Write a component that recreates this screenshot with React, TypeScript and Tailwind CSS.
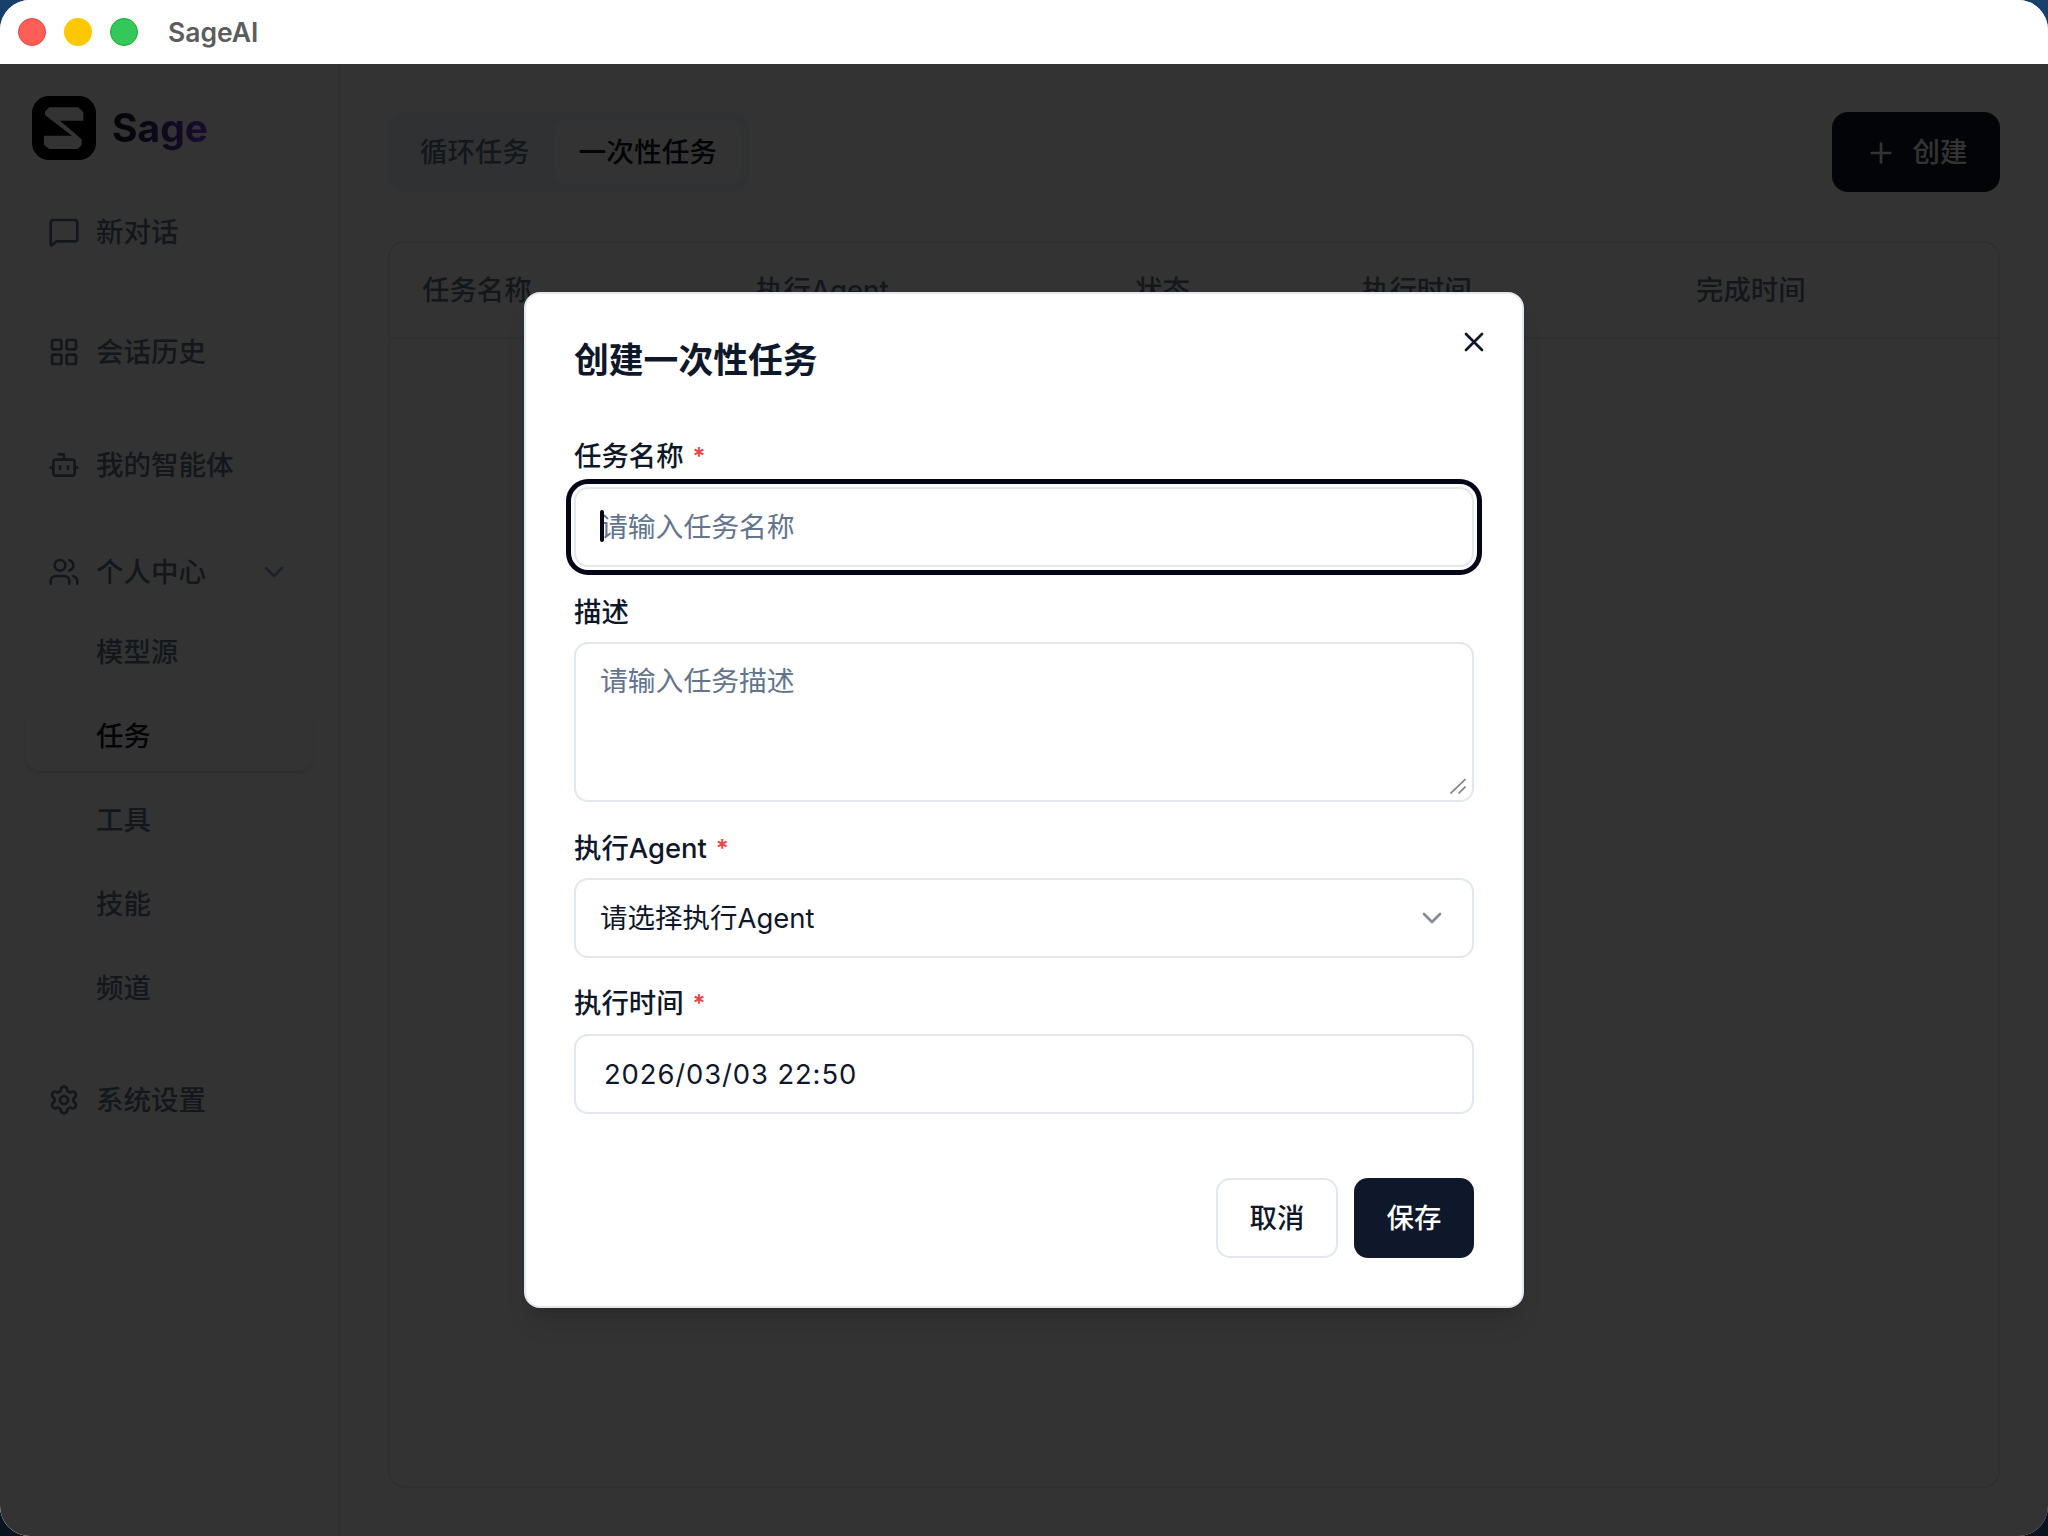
import { Bot, ChevronDown, LayoutGrid, MessageSquare, Plus, Settings, Users, X } from 'lucide-react';

const font = "font-['Inter','Noto_Sans_CJK_SC',sans-serif]";

const SubItem = ({ label, active }: { label: string; active?: boolean }) => (
  <div
    className={`flex items-center h-[70px] mx-[25px] pl-[71px] pt-[2px] rounded-[16px] text-[27.4px] font-medium ${
      active ? 'bg-white text-[#0f172a] shadow-md' : 'text-slate-500'
    }`}
  >
    {label}
  </div>
);

const NavItem = ({ icon, label, className = '' }: { icon: React.ReactNode; label: string; className?: string }) => (
  <div className={`flex items-center h-[70px] pl-[48px] gap-[16px] text-[27.5px] font-medium text-slate-500 ${className}`}>
    {icon}
    <span className="pt-[2px]">{label}</span>
  </div>
);

const Label = ({ text, required }: { text: string; required?: boolean }) => (
  <label className="flex items-center h-[40px] pt-[2px] text-[27.4px] font-medium text-[#0f172a]">
    {text}
    {required && <span className="ml-[9px] text-[#ef4444] text-[24px] font-semibold leading-none">*</span>}
  </label>
);

const Logo = () => (
  <svg width="64" height="64" viewBox="0 0 64 64" className="shrink-0">
    <rect width="64" height="64" rx="17" fill="#000" />
    <path
      d="M17.500 11.300H46.300L51.300 16.300V24.700H28L49.700 43.300V49L45.700 53H17.300L12 49V39.700H40L13 19V15.500Z"
      fill="#fff"
    />
  </svg>
);

export default function App() {
  return (
    <div className={`relative w-[2048px] h-[1536px] overflow-hidden bg-gradient-to-b from-[#17406a] to-[#081520] ${font}`}>
      <div className="flex flex-col h-full rounded-[30px] overflow-hidden bg-white">
        {/* title bar */}
        <div className="flex items-center h-[64px] shrink-0 pl-[18px] bg-white">
          <div className="w-[28px] h-[28px] rounded-full bg-[#ff5f57] border border-[#e0443e]" />
          <div className="w-[28px] h-[28px] rounded-full bg-[#fec800] ml-[18px]" />
          <div className="w-[28px] h-[28px] rounded-full bg-[#34c759] border border-[#1aab29] ml-[18px]" />
          <span className="ml-[30px] pt-[1px] text-[26.500px] font-semibold text-[#5c5c5c]">SageAI</span>
        </div>

        <div className="relative flex flex-1 min-h-0">
          {/* sidebar */}
          <aside className="w-[340px] shrink-0 border-r-2 border-slate-200 pt-[32px] bg-white">
            <div className="flex items-center pl-[32px] gap-[16px]">
              <Logo />
              <span className="text-[39px] font-bold bg-gradient-to-r from-[#0f172a] to-[#7c3aed] bg-clip-text text-transparent">Sage</span>
            </div>
            <NavItem icon={<MessageSquare size={32} />} label="新对话" className="mt-[37px]" />
            <NavItem icon={<LayoutGrid size={32} />} label="会话历史" className="mt-[50px]" />
            <NavItem icon={<Bot size={32} />} label="我的智能体" className="mt-[43px]" />
            <div className="relative mt-[37px]">
              <NavItem icon={<Users size={32} />} label="个人中心" />
              <ChevronDown size={32} className="absolute left-[258px] top-[19px] text-slate-400" />
            </div>
            <div className="flex flex-col gap-[14px] mt-[10px]">
              <SubItem label="模型源" />
              <SubItem label="任务" active />
              <SubItem label="工具" />
              <SubItem label="技能" />
              <SubItem label="频道" />
            </div>
            <NavItem icon={<Settings size={32} />} label="系统设置" className="mt-[42px]" />
          </aside>

          {/* main */}
          <main className="flex flex-col flex-1 min-w-0 pl-[48px] pr-[48px] pt-[48px] pb-[48px]">
            <div className="flex items-center justify-between h-[80px]">
              <div className="flex items-center h-[80px] px-[8px] rounded-[16px] bg-slate-100 text-[27.4px] font-medium">
                <div className="flex items-center h-[64px] px-[24px] pt-[2px] text-slate-500">循环任务</div>
                <div className="flex items-center h-[64px] ml-[1px] px-[24px] pt-[2px] rounded-[12px] bg-white text-[27.7px] text-[#0f172a]">一次性任务</div>
              </div>
              <button className="flex items-center justify-center gap-[16px] w-[168px] h-[80px] pt-[1px] rounded-[16px] bg-[#0f172a] text-white text-[27.4px] font-medium">
                <Plus size={32} />
                创建
              </button>
            </div>
            <div className="flex-1 mt-[49px] border-2 border-slate-200 rounded-[16px]">
              <div className="grid grid-cols-[334px_379px_227px_334px_1fr] items-center h-[96px] pt-[2px] px-[32px] border-b-2 border-slate-200 text-[27.4px] text-slate-500 font-medium">
                <span>任务名称</span>
                <span>执行Agent</span>
                <span>状态</span>
                <span>执行时间</span>
                <span>完成时间</span>
              </div>
            </div>
          </main>

          {/* dialog backdrop */}
          <div className="absolute inset-0 flex items-center justify-center bg-black/80">
            <div className="relative w-[1000px] h-[1016px] px-[48px] pt-[43px] rounded-[16px] border-2 border-slate-200 bg-white shadow-xl">
              <h2 className="h-[46px] flex items-center text-[34.8px] font-semibold text-[#0f172a]">创建一次性任务</h2>
              <button className="absolute right-[32px] top-[32px] text-[#0f172a]">
                <X size={32} />
              </button>

              <div className="mt-[53px]">
                <Label text="任务名称" required />
              </div>
              <div className="relative mt-[11px]">
                <input
                  readOnly
                  placeholder="请输入任务名称"
                  className="block w-full h-[80px] px-[24px] rounded-[14px] border-2 border-slate-200 bg-white text-[27.8px] placeholder:text-slate-500 outline-none ring-[5px] ring-[#020617] ring-offset-[3px]"
                />
                <div className="absolute left-[26px] top-[23px] w-[4px] h-[32px] rounded-full bg-[#020617]" />
              </div>

              <div className="mt-[25px]">
                <Label text="描述" />
              </div>
              <div className="relative mt-[10px]">
                <textarea
                  readOnly
                  placeholder="请输入任务描述"
                  className="block w-full h-[160px] px-[24px] py-[19px] rounded-[14px] border-2 border-slate-200 text-[27.8px] leading-[36px] placeholder:text-slate-500 outline-none resize-none"
                />
                {/* resize grip */}
                <svg width="16" height="16" viewBox="0 0 16 16" className="absolute right-[8px] bottom-[8px]" stroke="#808080" strokeWidth="1.600">
                  <path d="M0.500 15.500L15.500 1M8.500 15.500L15.500 8.500" fill="none" />
                </svg>
              </div>

              <div className="mt-[26px]">
                <Label text="执行Agent" required />
              </div>
              <div className="flex items-center justify-between h-[80px] mt-[10px] pl-[24px] pr-[24px] rounded-[14px] border-2 border-slate-200 text-[27.5px] text-[#0f172a]">
                <span className="pt-[2px]">请选择执行Agent</span>
                <ChevronDown size={32} className="text-[#0f172a]/50" />
              </div>

              <div className="mt-[25px]">
                <Label text="执行时间" required />
              </div>
              <input
                readOnly
                value="2026/03/03 22:50"
                className="block w-full h-[80px] mt-[11px] px-[28px] rounded-[14px] border-2 border-slate-200 text-[27.4px] tracking-[0.9px] text-[#0f172a] outline-none"
              />

              <div className="flex justify-end gap-[16px] mt-[64px]">
                <button className="w-[122px] h-[80px] pt-[2px] rounded-[14px] border-2 border-slate-200 bg-white text-[27.4px] font-medium text-[#0f172a]">取消</button>
                <button className="w-[120px] h-[80px] pt-[2px] rounded-[14px] bg-[#0f172a] text-[27.4px] font-medium text-white">保存</button>
              </div>
            </div>
          </div>
        </div>
      </div>
    </div>
  );
}
